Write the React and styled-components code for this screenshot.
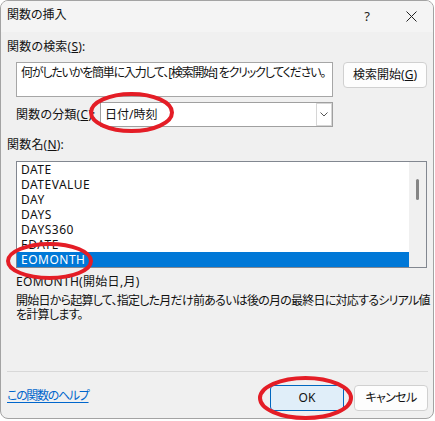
import React from 'react';
import styled, { createGlobalStyle } from 'styled-components';

const Global = createGlobalStyle`
  html, body { margin: 0; padding: 0; background: #ffffff; }
  body { font-family: "Noto Sans", "Noto Sans CJK JP", sans-serif; }
`;

const FONT = `"Noto Sans", "Noto Sans CJK JP", sans-serif`;

const Stage = styled.div`
  position: relative;
  width: 435px;
  height: 421px;
`;

const Dialog = styled.div`
  box-sizing: border-box;
  width: 434px;
  height: 419px;
  border: 1px solid #a3a3a3;
  border-radius: 8px;
  background: #f0f0f0;
  overflow: hidden;
  display: flex;
  flex-direction: column;
  font-family: ${FONT};
  font-size: 12px;
  color: #111111;
  font-feature-settings: "palt";
`;

const TitleBar = styled.div`
  height: 31px;
  flex: none;
  display: flex;
  background: #f4f4f4;
`;

const TitleText = styled.div`
  flex: 1;
  padding: 6px 0 0 6px;
  line-height: 16px;
`;

const TitleButton = styled.div`
  width: ${p => p.$w}px;
  display: flex;
  align-items: center;
  justify-content: center;
  font-size: 13px;
  color: #222;
  padding-bottom: 1px;
`;

const Body = styled.div`
  flex: 1;
  display: flex;
  flex-direction: column;
  padding: 0 5px 0 6px;
`;

const Label = styled.div`
  line-height: 16px;
  margin-top: ${p => p.$mt}px;
  letter-spacing: 0.2px;
`;

const SearchRow = styled.div`
  margin-top: 7px;
  padding-left: 9px;
  display: flex;
  align-items: flex-start;
  gap: 10px;
`;

const SearchBox = styled.div`
  box-sizing: border-box;
  width: 317px;
  height: 35px;
  border: 1px solid #a6a6a6;
  background: #ffffff;
  padding: 2px 4px;
  line-height: 16px;
  white-space: nowrap;
  overflow: hidden;
  letter-spacing: -1.2px;
`;

const PushButton = styled.div`
  box-sizing: border-box;
  width: ${p => p.$w}px;
  height: ${p => p.$h || 26}px;
  border: 1px solid ${p => (p.$primary ? '#0067c0' : '#d0d0d0')};
  border-radius: 4px;
  background: ${p => (p.$primary ? '#e0eef9' : '#fdfdfd')};
  display: flex;
  align-items: center;
  justify-content: center;
  line-height: 16px;
  color: #111111;
  letter-spacing: ${p => p.$tracking || 0}px;
`;

const CategoryRow = styled.div`
  margin-top: 5px;
  padding-left: 9px;
  display: flex;
  align-items: center;
  height: 25px;
`;

const CategoryLabel = styled.div`
  width: 84px;
  line-height: 16px;
  letter-spacing: 0.2px;
`;

const Combo = styled.div`
  box-sizing: border-box;
  width: 233px;
  height: 25px;
  border: 1px solid #a0a0a0;
  background: #ffffff;
  display: flex;
  align-items: stretch;
`;

const ComboValue = styled.div`
  flex: 1;
  display: flex;
  align-items: center;
  padding-left: 4px;
  line-height: 16px;
`;

const ComboArrow = styled.div`
  box-sizing: border-box;
  width: 16px;
  border: 1px solid #d6d6d6;
  display: flex;
  align-items: center;
  justify-content: center;
`;

const ListBox = styled.div`
  box-sizing: border-box;
  margin-top: 8px;
  margin-left: 9px;
  width: 411px;
  height: 107px;
  border: 1px solid #828790;
  background: #ffffff;
  display: flex;
`;

const Items = styled.div`
  flex: 1;
  display: flex;
  flex-direction: column;
`;

const Item = styled.div`
  height: 15px;
  line-height: 15px;
  padding-left: 4px;
  letter-spacing: 0.5px;
  background: ${p => (p.$selected ? '#0078d7' : 'transparent')};
  color: ${p => (p.$selected ? '#ffffff' : '#111111')};
`;

const ScrollTrack = styled.div`
  width: 17px;
  background: #f0f0f0;
  display: flex;
  flex-direction: column;
  align-items: center;
`;

const Thumb = styled.div`
  margin-top: 17px;
  width: 3px;
  height: 21px;
  border-radius: 1.5px;
  background: #858585;
`;

const Syntax = styled.div`
  margin-top: 6px;
  padding-left: 9px;
  line-height: 16px;
  letter-spacing: 0.3px;
`;

const Description = styled.div`
  margin-top: 4px;
  padding-left: 9px;
  line-height: 14px;
  letter-spacing: -0.75px;
  white-space: nowrap;
`;

const Spacer = styled.div`
  flex: 1;
`;

const Separator = styled.div`
  height: 1px;
  background: #d8d8d8;
  flex: none;
`;

const Footer = styled.div`
  height: 46px;
  flex: none;
  display: flex;
  align-items: flex-start;
  padding-top: 13px;
  box-sizing: border-box;
`;

const HelpLink = styled.a`
  flex: 1;
  margin-top: 3px;
  line-height: 16px;
  color: #0066cc;
  text-decoration: underline;
  text-underline-offset: 2px;
  letter-spacing: -1.3px;
`;

const ButtonGroup = styled.div`
  display: flex;
  gap: 10px;
`;

const Mark = styled.svg`
  position: absolute;
  left: ${p => p.$x}px;
  top: ${p => p.$y}px;
  overflow: visible;
  pointer-events: none;
`;

function RedEllipse({ x, y, w, h }) {
  return (
    <Mark $x={x} $y={y} width={w} height={h} viewBox={`0 0 ${w} ${h}`}>
      <ellipse cx={w / 2} cy={h / 2} rx={w / 2 - 2} ry={h / 2 - 2} fill="none" stroke="#e41d26" strokeWidth="4" />
    </Mark>
  );
}

const items = ['DATE', 'DATEVALUE', 'DAY', 'DAYS', 'DAYS360', 'EDATE', 'EOMONTH'];

export default function App() {
  return (
    <Stage>
      <Global />
      <Dialog>
        <TitleBar>
          <TitleText>関数の挿入</TitleText>
          <TitleButton $w={46}>?</TitleButton>
          <TitleButton $w={43}>
            <svg width="11" height="11" viewBox="0 0 11 11">
              <path d="M0.5 0.5 L10.5 10.5 M10.5 0.5 L0.5 10.5" stroke="#222" strokeWidth="1" fill="none" />
            </svg>
          </TitleButton>
        </TitleBar>
        <Body>
          <Label $mt={7}>関数の検索(<u>S</u>):</Label>
          <SearchRow>
            <SearchBox>何がしたいかを簡単に入力して、[検索開始] をクリックしてください。</SearchBox>
            <PushButton $w={84} $h={26}>検索開始(<u>G</u>)</PushButton>
          </SearchRow>
          <CategoryRow>
            <CategoryLabel>関数の分類(<u>C</u>):</CategoryLabel>
            <Combo>
              <ComboValue>日付/時刻</ComboValue>
              <ComboArrow>
                <svg width="8" height="5" viewBox="0 0 8 5">
                  <path d="M0.5 0.5 L4 4 L7.5 0.5" stroke="#555" strokeWidth="1" fill="none" />
                </svg>
              </ComboArrow>
            </Combo>
          </CategoryRow>
          <Label $mt={10}>関数名(<u>N</u>):</Label>
          <ListBox>
            <Items>
              {items.map(name => (
                <Item key={name} $selected={name === 'EOMONTH'}>{name}</Item>
              ))}
            </Items>
            <ScrollTrack>
              <Thumb />
            </ScrollTrack>
          </ListBox>
          <Syntax>EOMONTH(開始日,月)</Syntax>
          <Description>
            開始日から起算して、指定した月だけ前あるいは後の月の最終日に対応するシリアル値
            <br />
            を計算します。
          </Description>
          <Spacer />
          <Separator />
          <Footer>
            <HelpLink>この関数のヘルプ</HelpLink>
            <ButtonGroup>
              <PushButton $w={74} $primary>OK</PushButton>
              <PushButton $w={74} $tracking={-0.6}>キャンセル</PushButton>
            </ButtonGroup>
          </Footer>
        </Body>
      </Dialog>
      <RedEllipse x={89} y={92} w={85} h={41} />
      <RedEllipse x={6} y={242} w={87} h={38} />
      <RedEllipse x={258} y={376} w={95} h={44} />
    </Stage>
  );
}
